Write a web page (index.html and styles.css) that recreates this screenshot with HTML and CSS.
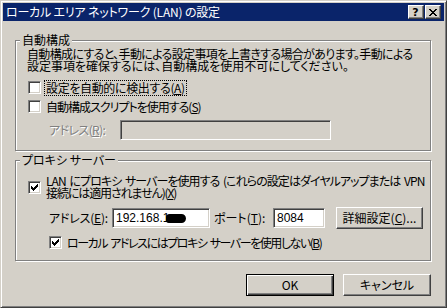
FILE: index.html
```html
<!DOCTYPE html>
<html lang="ja">
<head>
<meta charset="utf-8">
<title>ローカル エリア ネットワーク (LAN) の設定</title>
<link rel="stylesheet" href="styles.css">
</head>
<body>
<div class="window">
  <div class="titlebar">
    <span class="title">ローカル エリア ネットワーク (LAN) の設定</span>
    <div class="caption-btns">
      <span class="cbtn help">?</span>
      <span class="cbtn close"><svg width="8" height="7" viewBox="0 0 8 7" shape-rendering="crispEdges"><path d="M0 0h2v1H0zM6 0h2v1H6zM1 1h2v1H1zM5 1h2v1H5zM2 2h4v1H2zM3 3h2v1H3zM2 4h4v1H2zM1 5h2v1H1zM5 5h2v1H5zM0 6h2v1H0zM6 6h2v1H6z" fill="#000"/></svg></span>
    </div>
  </div>
  <div class="content">
    <div class="group g1">
      <div class="group-title">自動構成</div>
      <p class="desc"><span class="line d1">自動構成にすると、手動による設定事項を上書きする場合があります。手動による</span><span class="line d2">設定事項を確保するには、自動構成を使用不可にしてください。</span></p>
      <div class="row r-auto">
        <span class="check"></span>
        <span class="label focus t-auto">設定を自動的に検出する(<u>A</u>)</span>
      </div>
      <div class="row r-script">
        <span class="check"></span>
        <span class="label t-script">自動構成スクリプトを使用する(<u>S</u>)</span>
      </div>
      <div class="row r-addr1">
        <span class="field-label disabled t-addr1">アドレス(<u>R</u>):</span>
        <div class="field field-disabled w-script"></div>
      </div>
    </div>
    <div class="group g2">
      <div class="group-title">プロキシ サーバー</div>
      <div class="row r-lan">
        <span class="check checked"><svg width="7" height="7" viewBox="0 0 7 7" shape-rendering="crispEdges"><path d="M0 2h1v3H0zM1 3h1v3H1zM2 4h1v3H2zM3 3h1v3H3zM4 2h1v3H4zM5 1h1v3H5zM6 0h1v3H6z" fill="#000"/></svg></span>
        <span class="label two-line"><span class="line l1">LAN にプロキシ サーバーを使用する (これらの設定はダイヤルアップまたは VPN</span><span class="line l2">接続には適用されません)(<u>X</u>)</span></span>
      </div>
      <div class="row r-addr2">
        <span class="field-label lbl-addr">アドレス(<u>E</u>):</span>
        <div class="field w-addr"><span class="field-text">192.168.1</span><span class="redact"></span></div>
        <span class="field-label lbl-port">ポート(<u>T</u>):</span>
        <div class="field w-port"><span class="field-text">8084</span></div>
        <span class="btn btn-adv">詳細設定(<u>C</u>)...</span>
      </div>
      <div class="row r-local">
        <span class="check checked"><svg width="7" height="7" viewBox="0 0 7 7" shape-rendering="crispEdges"><path d="M0 2h1v3H0zM1 3h1v3H1zM2 4h1v3H2zM3 3h1v3H3zM4 2h1v3H4zM5 1h1v3H5zM6 0h1v3H6z" fill="#000"/></svg></span>
        <span class="label t-local">ローカル アドレスにはプロキシ サーバーを使用しない(<u>B</u>)</span>
      </div>
    </div>
    <div class="actions">
      <span class="btn btn-default">OK</span>
      <span class="btn">キャンセル</span>
    </div>
  </div>
</div>
</body>
</html>
```
FILE: styles.css
```css
html, body {
  margin: 0;
  padding: 0;
  background: #d4d0c8;
}

body {
  font-family: "Noto Sans CJK JP", sans-serif;
  font-size: 12px;
  line-height: 12px;
  color: #000;
  font-feature-settings: "palt";
}

.window {
  width: 447px;
  height: 308px;
  box-sizing: border-box;
  border: 1px solid;
  border-color: #d4d0c8 #404040 #404040 #d4d0c8;
  box-shadow: inset 1px 1px 0 #fff, inset -1px -1px 0 #808080;
  padding: 2px;
  background: #d4d0c8;
}

.titlebar {
  height: 18px;
  background: #0a246a;
  display: flex;
  align-items: center;
  padding: 0 3px;
  color: #fff;
}

.title {
  flex: 1;
  white-space: nowrap;
  letter-spacing: -0.2px;
}

.caption-btns {
  display: flex;
  gap: 1px;
}

.cbtn {
  width: 16px;
  height: 14px;
  box-sizing: border-box;
  background: #d4d0c8;
  border: 1px solid;
  border-color: #fff #404040 #404040 #fff;
  box-shadow: inset -1px -1px 0 #808080;
  display: flex;
  align-items: center;
  justify-content: center;
  color: #000;
}

.help {
  font-family: "DejaVu Sans", sans-serif;
  font-weight: bold;
  font-size: 11px;
  line-height: 11px;
  padding-right: 1px;
}

.close svg {
  display: block;
  margin-right: 1px;
}

.content {
  padding: 19px 0 0 12px;
}

.group {
  width: 416px;
  box-sizing: border-box;
  border: 1px solid #808080;
  box-shadow: inset 1px 1px 0 #fff, 1px 1px 0 #fff;
  padding: 0 0 10px 11px;
}

.g2 {
  margin-top: 9px;
  padding-bottom: 9px;
}

.group-title {
  margin: -7px 0 0 -7px;
  padding: 0 2px;
  width: max-content;
  height: 12px;
  background: #d4d0c8;
  white-space: nowrap;
}

.desc {
  margin: 2px 0 0;
  white-space: nowrap;
}

.line {
  display: block;
  white-space: nowrap;
}

.d1 {
  letter-spacing: -0.65px;
}

.row {
  display: flex;
  align-items: center;
  white-space: nowrap;
}

.check {
  width: 13px;
  height: 13px;
  box-sizing: border-box;
  flex: none;
  background: #fff;
  border: 1px solid;
  border-color: #808080 #fff #fff #808080;
  box-shadow: inset 1px 1px 0 #404040, inset -1px -1px 0 #d4d0c8;
  margin-left: 1px;
  display: flex;
  align-items: center;
  justify-content: center;
}

.check svg {
  display: block;
}

.label {
  margin-left: 5px;
}

.focus {
  outline: 1px dotted #000;
  outline-offset: 1px;
}

.t-auto {
  letter-spacing: -0.35px;
}

.t-script {
  letter-spacing: -1px;
}

.t-local {
  letter-spacing: -1.45px;
  word-spacing: 2px;
}

.l1 {
  letter-spacing: -0.95px;
  word-spacing: 2px;
}

.l2 {
  letter-spacing: -1.1px;
}

.r-auto {
  margin-top: 7px;
  height: 17px;
}

.r-script {
  margin-top: 2px;
  height: 17px;
}

.r-addr1 {
  margin-top: 5px;
  height: 20px;
}

.field-label {
  margin-left: 22px;
  width: 71px;
  flex: none;
}

.t-addr1 {
  letter-spacing: -0.6px;
}

.disabled {
  color: #808080;
  text-shadow: 1px 1px 0 #fff;
}

.field {
  height: 20px;
  box-sizing: border-box;
  background: #fff;
  border: 1px solid;
  border-color: #808080 #fff #fff #808080;
  box-shadow: inset 1px 1px 0 #404040, inset -1px -1px 0 #d4d0c8;
  display: flex;
  align-items: center;
  padding-left: 3px;
  flex: none;
}

.field-disabled {
  background: #d4d0c8;
}

.w-script {
  width: 211px;
}

.r-lan {
  margin-top: 9px;
}

.r-addr2 {
  margin-top: 8px;
  height: 22px;
}

.lbl-addr {
  width: 63px;
  letter-spacing: -0.2px;
}

.w-addr {
  width: 98px;
}

.lbl-port {
  margin-left: 4px;
  width: 59px;
}

.w-port {
  width: 52px;
}

.field-text {
  font-family: "Liberation Sans", sans-serif;
  font-size: 12px;
}

.redact {
  width: 20px;
  height: 9px;
  background: #000;
  border-radius: 4px 5px 5px 3px;
  margin-left: -3px;
}

.btn {
  height: 22px;
  box-sizing: border-box;
  background: #d4d0c8;
  border: 1px solid;
  border-color: #fff #404040 #404040 #fff;
  box-shadow: inset -1px -1px 0 #808080;
  display: flex;
  align-items: center;
  justify-content: center;
  white-space: nowrap;
}

.btn-adv {
  width: 87px;
  margin-left: 11px;
}

.r-local {
  margin-top: 5px;
  height: 17px;
}

.r-local .check {
  margin-left: 22px;
}

.actions {
  width: 416px;
  margin-top: 13px;
  display: flex;
  justify-content: flex-end;
  gap: 9px;
}

.actions .btn {
  width: 88px;
}

.btn-default {
  border-color: #000;
  box-shadow: inset 1px 1px 0 #fff, inset -1px -1px 0 #404040, inset -2px -2px 0 #808080;
}
```
